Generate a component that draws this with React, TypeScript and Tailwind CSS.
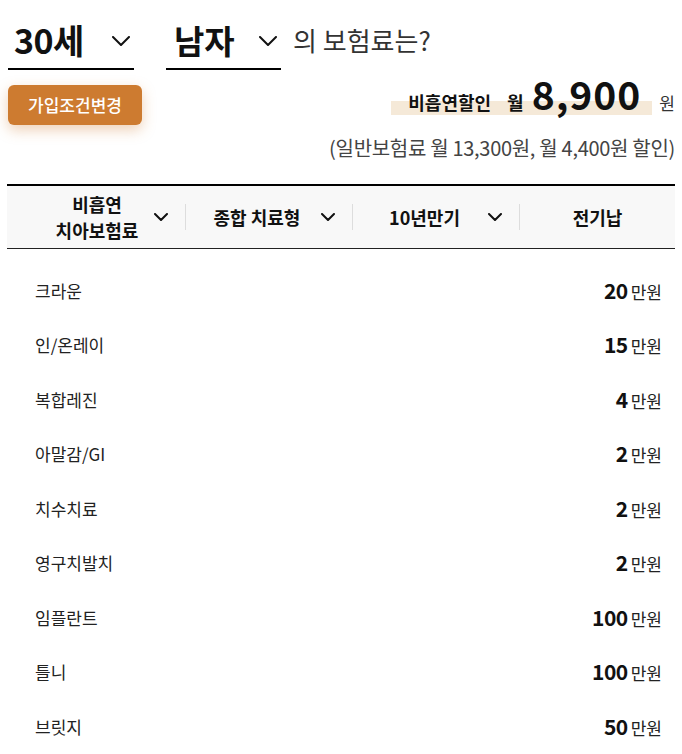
const rows = [
  { name: "크라운", amount: "20" },
  { name: "인/온레이", amount: "15" },
  { name: "복합레진", amount: "4" },
  { name: "아말감/GI", amount: "2" },
  { name: "치수치료", amount: "2" },
  { name: "영구치발치", amount: "2" },
  { name: "임플란트", amount: "100" },
  { name: "틀니", amount: "100" },
  { name: "브릿지", amount: "50" },
];

const font = "font-['Noto_Sans_CJK_KR','Noto_Sans',sans-serif]";

const Chevron = ({ w, h, className = "" }: { w: number; h: number; className?: string }) => (
  <svg width={w} height={h} viewBox={`0 0 ${w} ${h}`} className={`shrink-0 ${className}`} fill="none">
    <polyline
      points={`1,1 ${w / 2},${h - 1} ${w - 1},1`}
      stroke="#111"
      strokeWidth={2}
      strokeLinecap="round"
      strokeLinejoin="round"
    />
  </svg>
);

export default function App() {
  return (
    <div className={`w-[682px] h-[754px] overflow-hidden bg-white text-[#111] ${font}`}>
      {/* 나이 / 성별 선택 */}
      <div className="flex items-end pt-[12px]">
        <div className="ml-[8px] w-[126px] h-[58px] border-b-2 border-black flex items-center justify-between pl-[6px] pr-[4px]">
          <span className="text-[34px] font-bold leading-none tracking-[-0.5px]">30세</span>
          <Chevron w={18} h={10} className="mt-[2px]" />
        </div>
        <div className="ml-[32px] w-[115px] h-[58px] border-b-2 border-black flex items-center justify-between pl-[8px] pr-[4px]">
          <span className="text-[33px] font-bold leading-none">남자</span>
          <Chevron w={18} h={10} className="mt-[2px]" />
        </div>
        <div className="ml-[12px] h-[58px] flex items-center text-[26px] text-[#333] leading-none pb-[2px]">
          의 보험료는?
        </div>
      </div>

      {/* 버튼 + 보험료 */}
      <div className="flex justify-between items-start mt-[15px] pr-[7px]">
        <button
          type="button"
          className="ml-[8px] w-[134px] h-[40px] rounded-[6px] bg-[#cd7b30] text-white text-[17px] font-medium shadow-[0_5px_14px_rgba(205,123,48,0.35)]"
        >
          가입조건변경
        </button>
        <div className="flex items-baseline mt-[-11px]">
          <div className="relative flex items-baseline pl-[17px] pr-[11px]">
            <div className="absolute left-0 right-0 bottom-[-2px] h-[14px] bg-[#f5e9d8]" />
            <span className="relative text-[18px] font-bold leading-none">비흡연할인</span>
            <span className="relative ml-[16px] text-[18px] font-bold leading-none">월</span>
            <span className="relative ml-[8px] text-[39px] font-bold leading-none tracking-[1px]">8,900</span>
          </div>
          <span className="ml-[7px] text-[17px] text-[#333] leading-none">원</span>
        </div>
      </div>
      <div className="text-right pr-[7px] mt-[11px] text-[20px] leading-[24px] text-[#444] tracking-[-0.3px]">
        (일반보험료 월 13,300원, 월 4,400원 할인)
      </div>

      {/* 테이블 헤더 */}
      <div className="mx-[7px] mt-[24px] border-t-2 border-black border-b border-b-[#222] bg-[#f8f8f8] h-[65px] grid grid-cols-[179px_167px_167px_1fr] items-center">
        <div className="flex items-center pr-[17px] border-r border-[#ddd] h-[26px]">
          <span className="flex-1 pl-[33px] text-center text-[18px] font-bold leading-[26px]">
            비흡연
            <br />
            치아보험료
          </span>
          <Chevron w={14} h={8} />
        </div>
        <div className="flex items-center pr-[17px] border-r border-[#ddd] h-[26px]">
          <span className="flex-1 pl-[7px] text-center text-[18px] font-bold">종합 치료형</span>
          <Chevron w={14} h={8} />
        </div>
        <div className="flex items-center pr-[17px] border-r border-[#ddd] h-[26px]">
          <span className="flex-1 pl-[8px] text-center text-[18px] font-bold">10년만기</span>
          <Chevron w={14} h={8} />
        </div>
        <div className="text-center text-[18px] font-bold">전기납</div>
      </div>

      {/* 보장 목록 */}
      <div className="mx-[7px] pt-[14px]">
        {rows.map((row) => (
          <div key={row.name} className="h-[54.5px] flex items-center justify-between pl-[28px] pr-[13px]">
            <span className="text-[17px] text-[#222]">{row.name}</span>
            <span className="flex items-baseline">
              <span className="text-[21px] font-bold tracking-[-0.5px]">{row.amount}</span>
              <span className="ml-[3px] text-[17px] text-[#222]">만원</span>
            </span>
          </div>
        ))}
      </div>
    </div>
  );
}
